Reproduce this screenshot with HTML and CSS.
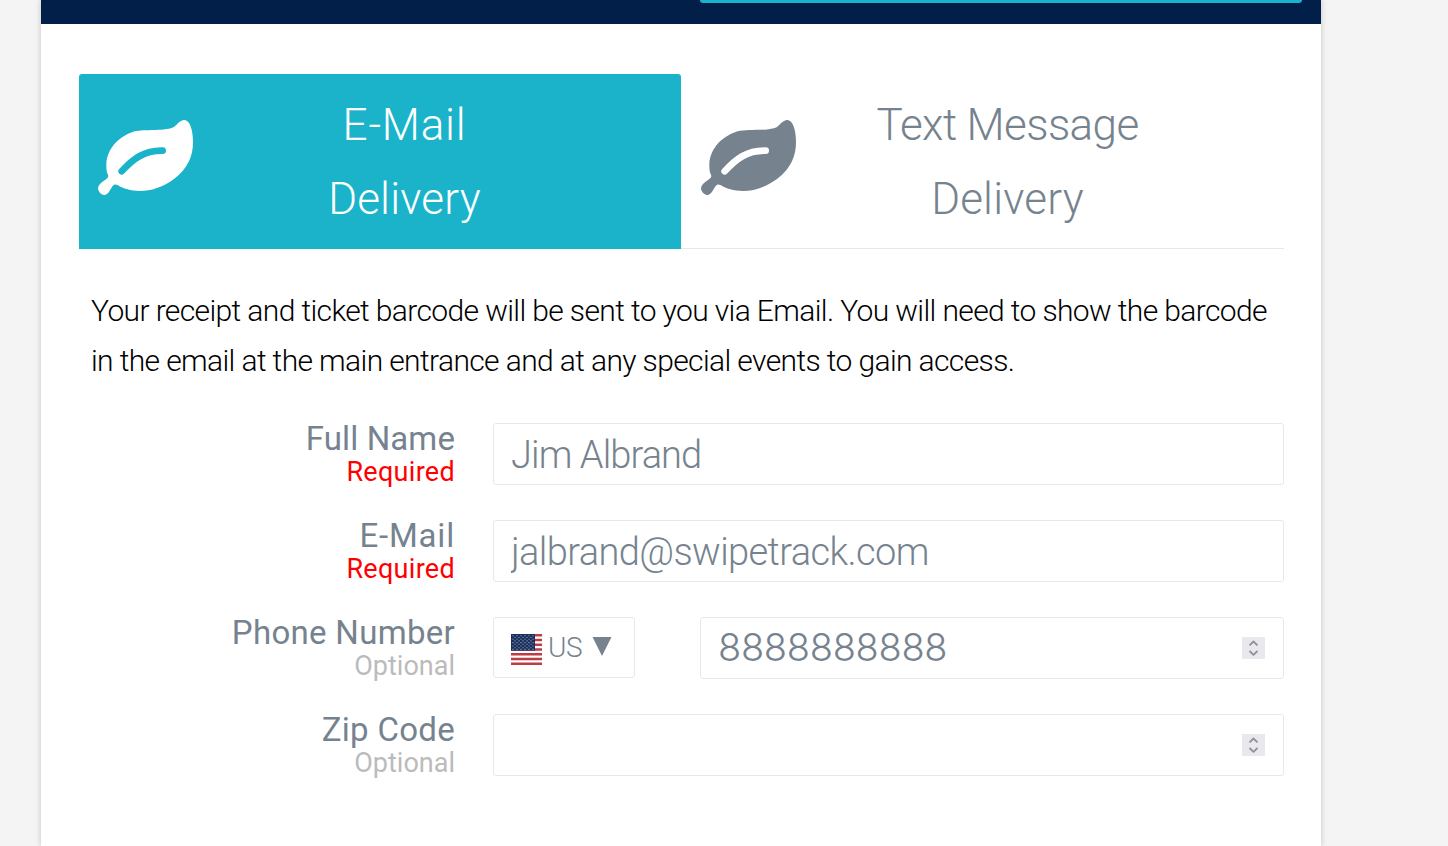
FILE: index.html
```html
<!DOCTYPE html>
<html lang="en">
<head>
  <meta charset="UTF-8" />
  <meta name="viewport" content="width=device-width, initial-scale=1" />
  <title>Ticket Delivery</title>
  <link rel="stylesheet" href="styles.css">
</head>
<body>
  <!-- shared icons -->
  <svg class="sprite" aria-hidden="true">
    <symbol id="leaf" viewBox="0 0 288 228">
      <path fill="currentColor" d="M257 0C275-1 285 28 285 66C285 108 270 145 228 177C193 202 160 213 126 213C98 213 75 206 60 196C52 192 48 192 44 198C37 208 33 220 23 224C12 228 0 215 0 205C1 189 21 182 29 173C32 169 31 166 29 163C25 154 25 144 25 133C27 83 67 47 110 34C138 27 207 34 229 20C237 14 243 3 257 0Z" />
      <path class="vein" d="M71 154C105 117 137 91 194 92" />
    </symbol>
    <symbol id="flag-us" viewBox="0 0 31 31">
      <rect width="31" height="31" fill="#fff" />
      <path stroke="#bd3d44" stroke-width="2.4" d="M0 1.2h31M0 5.96h31M0 10.73h31M0 15.5h31M0 20.27h31M0 25.04h31M0 29.8h31" />
      <rect width="24" height="16.7" fill="#192f5d" />
      <path stroke="#8f9bb3" stroke-width="1.1" stroke-dasharray="1.2 2.8" d="M1.4 1.8h22M3.4 3.5h19M1.4 5.2h22M3.4 6.9h19M1.4 8.6h22M3.4 10.3h19M1.4 12h22M3.4 13.7h19M1.4 15.4h22" />
    </symbol>
  </svg>

  <div class="card">
    <div class="top-bar">
      <div class="top-btn"></div>
    </div>

    <div class="content">
      <div class="tabs">
        <div class="tab active">
          <svg class="tab-icon"><use href="#leaf" /></svg>
          <div class="tab-label"><span class="short">E-Mail</span><br>Delivery</div>
        </div>
        <div class="tab">
          <svg class="tab-icon"><use href="#leaf" /></svg>
          <div class="tab-label"><span class="long">Text Message</span><br>Delivery</div>
        </div>
      </div>

      <p class="info">Your receipt and ticket barcode will be sent to you via Email. You will need to show the barcode<br>
      in the email at the main entrance and at any special events to gain access.</p>

      <form>
        <div class="row">
          <label for="name">Full Name<small class="required">Required</small></label>
          <input type="text" id="name" class="field name" value="Jim Albrand" />
        </div>
        <div class="row">
          <label for="email"><span class="short">E-Mail</span><small class="required">Required</small></label>
          <input type="text" id="email" class="field" value="jalbrand@swipetrack.com" spellcheck="false" />
        </div>
        <div class="row">
          <label for="phone" class="wide">Phone Number<small>Optional</small></label>
          <div class="phone">
            <div class="country">
              <svg class="flag"><use href="#flag-us" /></svg>
              <span>US</span>
              <svg class="caret" viewBox="0 0 20 20"><path fill="currentColor" d="M0 0h20L10 20z" /></svg>
            </div>
            <div class="field number">
              <input type="text" id="phone" value="8888888888" />
              <svg class="spinner" viewBox="0 0 23 22"><path d="M7.5 8.3l4-3.8 4 3.8M7.5 14l4 3.8 4-3.8" /></svg>
            </div>
          </div>
        </div>
        <div class="row">
          <label for="zip" class="wide">Zip Code<small>Optional</small></label>
          <div class="field number">
            <input type="text" id="zip" />
            <svg class="spinner" viewBox="0 0 23 22"><path d="M7.5 8.3l4-3.8 4 3.8M7.5 14l4 3.8 4-3.8" /></svg>
          </div>
        </div>
      </form>
    </div>
  </div>
</body>
</html>
```
FILE: styles.css
```css
* {
  box-sizing: border-box;
}

body {
  margin: 0;
  height: 846px;
  overflow: hidden;
  background: #f4f4f4;
  font-family: Roboto, sans-serif;
  font-weight: 300;
  color: #000;
}

.sprite {
  display: none;
}

.card {
  width: 1280px;
  height: 846px;
  margin-left: 41px;
  background: #fff;
  box-shadow: 0 0 6px rgba(0, 0, 0, 0.2);
}

.top-bar {
  height: 24px;
  padding-right: 19px;
  background: #021f4a;
}

.top-btn {
  width: 602px;
  height: 3px;
  margin-left: auto;
  background: #1ab3c9;
  border-radius: 0 0 3px 3px;
}

.content {
  padding: 50px 37px 0 38px;
}

.tabs {
  display: flex;
  height: 175px;
}

.tab {
  flex: 1;
  display: flex;
  align-items: center;
  padding: 0 19px 0 20px;
  color: #76838f;
  border-bottom: 1px solid #e4eaec;
}

.tab.active {
  flex: 0 0 602px;
  padding-left: 19px;
  color: #fff;
  background: #1ab3c9;
  border-color: #1ab3c9;
  border-radius: 3px 3px 0 0;
}

.tab-icon {
  width: 96px;
  height: 76px;
  margin-top: -7px;
  flex-shrink: 0;
}

.active .tab-icon {
  --vein: #1ab3c9;
}

.vein {
  fill: none;
  stroke: var(--vein, #fff);
  stroke-width: 20;
  stroke-linecap: round;
}

.tab-label {
  flex: 1;
  padding: 1px 47px 0 0;
  text-align: center;
  font-size: 44px;
  line-height: 74px;
  letter-spacing: 0.2px;
}

.tab-label .long {
  letter-spacing: -0.6px;
}

.short {
  letter-spacing: 0.8px;
}

.info {
  margin: 37px 0 0;
  padding-left: 12px;
  font-size: 30px;
  line-height: 50px;
  letter-spacing: -0.62px;
  white-space: nowrap;
}

form {
  margin-top: 37px;
}

.row {
  display: grid;
  grid-template-columns: 376px 1fr;
  column-gap: 38px;
  height: 62px;
  margin-bottom: 35px;
}

label {
  text-align: right;
  font-size: 33px;
  font-weight: 400;
  line-height: 31px;
  letter-spacing: 0.1px;
  color: #76838f;
}

label.wide {
  letter-spacing: 0.3px;
}

label small {
  display: block;
  font-size: 27px;
  line-height: 37px;
  letter-spacing: 0;
  color: #bbb;
}

label .required {
  letter-spacing: 0.3px;
  color: #f00;
}

.field {
  width: 100%;
  height: 62px;
  padding: 0 18px 0 17px;
  border: 1px solid #e4eaec;
  border-radius: 3px;
  background: #fff;
}

input {
  font: 300 38px Roboto, sans-serif;
  letter-spacing: -0.6px;
  color: #76838f;
  outline: none;
}

input.field {
  padding-top: 1px;
}

.name {
  letter-spacing: -0.9px;
}

.phone {
  display: flex;
  justify-content: space-between;
}

.phone .field {
  width: 584px;
}

.country {
  display: flex;
  align-items: center;
  width: 142px;
  height: 61px;
  padding-left: 17px;
  border: 1px solid #e4eaec;
  border-radius: 3px;
  font-size: 28px;
  color: #76838f;
}

.country span {
  letter-spacing: -0.5px;
}

.flag {
  width: 31px;
  height: 31px;
  margin: 3px 6px 0 0;
}

.caret {
  width: 20px;
  height: 19px;
  margin: -3px 0 0 10px;
}

.number {
  display: flex;
  align-items: center;
}

.number input {
  flex: 1;
  min-width: 0;
  padding: 0 0 2px;
  border: none;
  font-family: Inter, sans-serif;
  letter-spacing: -0.3px;
}

.spinner {
  width: 23px;
  height: 22px;
  background: #e9e9ed;
}

.spinner path {
  fill: none;
  stroke: #8f8f9d;
  stroke-width: 1.8;
}
```
